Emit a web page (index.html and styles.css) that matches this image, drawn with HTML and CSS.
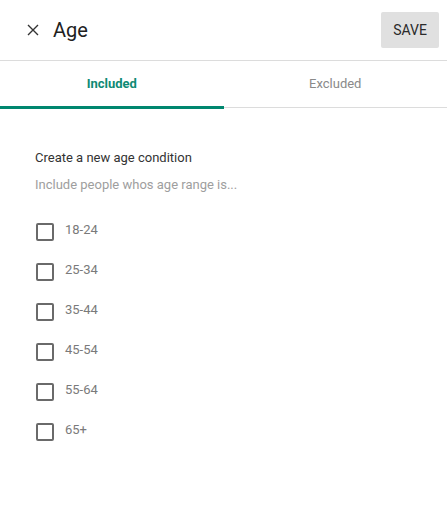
FILE: index.html
```html
<!DOCTYPE html>
<html lang="en">
<head>
<meta charset="utf-8">
<title>Age</title>
<link rel="stylesheet" href="styles.css">
</head>
<body>
<div class="dialog">
  <header class="header">
    <button class="close" aria-label="Close">
      <svg width="12" height="12" viewBox="0 0 12 12"><path d="M1 1 L11 11 M11 1 L1 11" stroke="#333" stroke-width="1.4" fill="none"/></svg>
    </button>
    <h1 class="title">Age</h1>
    <button class="save">SAVE</button>
  </header>
  <nav class="tabs">
    <div class="tab active">Included</div>
    <div class="tab">Excluded</div>
  </nav>
  <main class="content">
    <p class="heading">Create a new age condition</p>
    <p class="hint">Include people whos age range is...</p>
    <ul class="options">
      <li class="option"><span class="box"></span><span class="label">18-24</span></li>
      <li class="option"><span class="box"></span><span class="label">25-34</span></li>
      <li class="option"><span class="box"></span><span class="label">35-44</span></li>
      <li class="option"><span class="box"></span><span class="label">45-54</span></li>
      <li class="option"><span class="box"></span><span class="label">55-64</span></li>
      <li class="option"><span class="box"></span><span class="label">65+</span></li>
    </ul>
  </main>
</div>
</body>
</html>
```

FILE: styles.css
```css
* { box-sizing: border-box; }
html, body { margin: 0; padding: 0; background: #fff; }
body { font-family: Roboto, "Liberation Sans", sans-serif; color: #333; }

.header {
  height: 61px;
  display: flex;
  align-items: center;
  border-bottom: 1px solid #dcdcdc;
  padding: 0 8px 1px 27px;
}
.close {
  width: 12px; height: 12px;
  padding: 0; margin: 1px 14px 0 0;
  border: none; background: none;
  display: flex;
}
.title {
  margin: 0;
  flex: 1;
  font-size: 20px;
  line-height: 24px;
  font-weight: 400;
  color: #212121;
}
.save {
  width: 58px; height: 36px;
  border: none;
  border-radius: 2px;
  background: #e0e0e0;
  color: #2a2a2a;
  font-family: Roboto, "Liberation Sans", sans-serif;
  font-size: 14px;
  font-weight: 400;
  padding: 0;
  margin-top: 1px;
}

.tabs {
  display: flex;
  height: 47px;
  border-bottom: 1px solid #dcdcdc;
}
.tab {
  flex: 1;
  display: flex;
  align-items: center;
  justify-content: center;
  font-size: 13px;
  color: #8a8a8a;
  position: relative;
  padding-bottom: 1px;
}
.tab.active {
  color: #0e8a74;
  font-weight: 700;
}
.tab.active::after {
  content: "";
  position: absolute;
  left: 0; right: 0; bottom: -2px;
  height: 3px;
  background: #00876f;
}

.content { padding: 42px 35px 0; }
.heading {
  margin: 0;
  font-size: 13px;
  line-height: 16px;
  color: #333;
}
.hint {
  margin: 11px 0 0;
  font-size: 13px;
  line-height: 16px;
  color: #9e9e9e;
}
.options {
  list-style: none;
  margin: 18px 0 0;
  padding: 0;
}
.option {
  height: 40px;
  display: flex;
  align-items: center;
}
.box {
  width: 18px; height: 18px;
  border: 2px solid #6a6a6a;
  border-radius: 2px;
  margin-left: 1px;
  margin-top: 1px;
}
.label {
  margin-left: 11px;
  font-size: 13px;
  line-height: 16px;
  color: #7a7a7a;
  padding-bottom: 3px;
}
```
